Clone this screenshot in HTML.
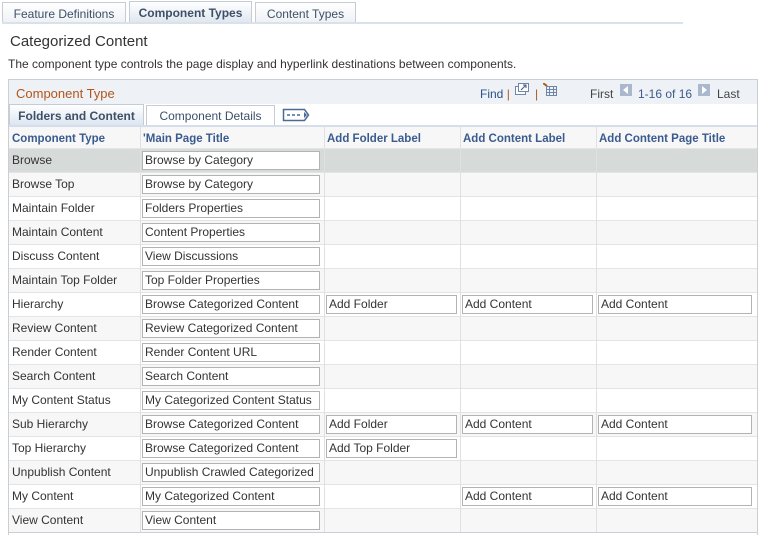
<!DOCTYPE html>
<html><head><meta charset="utf-8"><style>
*{margin:0;padding:0;box-sizing:border-box}
body{width:760px;height:535px;background:#fff;font-family:"Liberation Sans",Arial,sans-serif;font-size:12px;color:#333;position:relative;overflow:hidden}
.a{position:absolute;white-space:nowrap}
.tab{position:absolute;top:2px;height:21px;border:1px solid #c4ccd6;border-bottom:none;background:linear-gradient(#fff,#eef1f5);color:#3d5068;font-size:12px;line-height:23px;text-align:center}
.inp{position:absolute;height:19px;border:1px solid #b3b3b3;background:#fff;font-size:12px;line-height:17px;padding-left:2px;color:#333;overflow:hidden;white-space:nowrap}
.cell{position:absolute;font-size:12px;color:#333}
.vl{position:absolute;top:127px;width:1px;height:405px;background:#dde1e6}
.hd{position:absolute;top:133px;font-weight:bold;color:#3a5b8f;font-size:11.5px}
</style></head><body>
<div class="tab" style="left:2px;width:124px">Feature Definitions</div>
<div class="tab" style="left:129px;width:123px;top:1px;height:22px;background:linear-gradient(#fff,#dfe6ef);font-weight:bold">Component Types</div>
<div class="tab" style="left:255px;width:101px">Content Types</div>
<div class="a" style="left:2px;top:22px;width:681px;height:2px;background:#d9e1eb"></div>
<div class="a" style="left:10px;top:33px;font-size:15px;color:#333">Categorized Content</div>
<div class="a" style="left:8px;top:57px;font-size:12px;color:#333">The component type controls the page display and hyperlink destinations between components.</div>
<div class="a" style="left:8px;top:79px;width:750px;height:456px;border:1px solid #c9cfd7;border-bottom:none"></div>
<div class="a" style="left:9px;top:80px;width:748px;height:24px;background:#eef2f6"></div>
<div class="a" style="left:16px;top:86px;font-size:13px;color:#b0561c">Component Type</div>
<div class="a" style="left:480px;top:87px;font-size:12px;color:#2a5189">Find <span style="color:#b0561c">|</span></div>
<svg class="a" style="left:514px;top:83px" width="16" height="14"><rect x="1.5" y="3.5" width="10" height="8" fill="#fff" stroke="#6f86a8"/><rect x="4.5" y="0.5" width="10" height="8" fill="#fff" stroke="#6f86a8"/><path d="M7 7l5-5M9 2h3v3" stroke="#3c5a8a" fill="none"/></svg>
<div class="a" style="left:535px;top:87px;color:#b0561c">|</div>
<svg class="a" style="left:543px;top:83px" width="15" height="14"><path d="M0 0l4 3" stroke="#b0561c" stroke-width="2"/><g stroke="#6f86a8" fill="none"><rect x="3.5" y="3.5" width="10" height="9"/><path d="M3.5 6.5h10M3.5 9.5h10M6.5 3.5v9M10.5 3.5v9"/></g></svg>
<div class="a" style="left:590px;top:87px;color:#444">First</div>
<svg class="a" style="left:620px;top:84px" width="12" height="12"><rect width="12" height="12" fill="#a9b8cc"/><path d="M8 2L3 6l5 4z" fill="#fff"/></svg>
<div class="a" style="left:638px;top:87px;color:#3c5a8a">1-16 of 16</div>
<svg class="a" style="left:698px;top:84px" width="12" height="12"><rect width="12" height="12" fill="#a9b8cc"/><path d="M4 2l5 4-5 4z" fill="#fff"/></svg>
<div class="a" style="left:717px;top:87px;color:#444">Last</div>
<div class="a" style="left:9px;top:104px;width:135px;height:23px;border:1px solid #c4ccd6;border-bottom:none;background:linear-gradient(#fff,#d9e3ef);font-weight:bold;color:#3d5068;text-align:center;line-height:22px">Folders and Content</div>
<div class="a" style="left:146px;top:105px;width:129px;height:22px;border:1px solid #c4ccd6;border-bottom:none;background:#fff;color:#3d5068;text-align:center;line-height:21px">Component Details</div>
<svg class="a" style="left:282px;top:108px" width="28" height="14"><path d="M1.5 1.5h21l4 5.5-4 5.5h-21z" fill="#fff" stroke="#4d6a96" stroke-width="1.5"/><path d="M5 7h3M10 7h3M15 7h3" stroke="#4d6a96" stroke-width="1.5"/><path d="M22 4l3 3-3 3z" fill="#4d6a96"/></svg>
<div class="a" style="left:9px;top:125px;width:748px;height:2px;background:#d5deea"></div>
<div class="a" style="left:9px;top:127px;width:748px;height:21px;background:#f7f7f7"></div>
<div class="hd" style="left:12px">Component Type</div>
<div class="hd" style="left:143px">'Main Page Title</div>
<div class="hd" style="left:327px">Add Folder Label</div>
<div class="hd" style="left:463px">Add Content Label</div>
<div class="hd" style="left:599px">Add Content Page Title</div>
<div id="rows"></div>
<script>
var R=[["Browse","Browse by Category"],["Browse Top","Browse by Category"],["Maintain Folder","Folders Properties"],["Maintain Content","Content Properties"],["Discuss Content","View Discussions"],["Maintain Top Folder","Top Folder Properties"],["Hierarchy","Browse Categorized Content","Add Folder","Add Content","Add Content"],["Review Content","Review Categorized Content"],["Render Content","Render Content URL"],["Search Content","Search Content"],["My Content Status","My Categorized Content Status"],["Sub Hierarchy","Browse Categorized Content","Add Folder","Add Content","Add Content"],["Top Hierarchy","Browse Categorized Content","Add Top Folder"],["Unpublish Content","Unpublish Crawled Categorized"],["My Content","My Categorized Content","","Add Content","Add Content"],["View Content","View Content"]];
var h="";
R.forEach(function(r,i){var y=148+i*24;var bg=i==0?"#d6dbd9":(i%2?"#f7f7f7":"#fff");
h+='<div class="a" style="left:9px;top:'+y+'px;width:748px;height:24px;background:'+bg+';border-top:1px solid #e2e5e8"></div>';
h+='<div class="cell a" style="left:12px;top:'+(y+5)+'px">'+r[0]+'</div>';
h+='<div class="inp" style="left:142px;top:'+(y+3)+'px;width:178px">'+r[1]+'</div>';
if(r[2])h+='<div class="inp" style="left:326px;top:'+(y+3)+'px;width:131px">'+r[2]+'</div>';
if(r[3])h+='<div class="inp" style="left:462px;top:'+(y+3)+'px;width:131px">'+r[3]+'</div>';
if(r[4])h+='<div class="inp" style="left:598px;top:'+(y+3)+'px;width:154px">'+r[4]+'</div>';});
[140,324,460,596].forEach(function(x){h+='<div class="vl" style="left:'+x+'px"></div>'});
h+='<div class="a" style="left:9px;top:532px;width:748px;height:1px;background:#c9cfd7"></div>';
document.getElementById("rows").innerHTML=h;
</script>
</body></html>
